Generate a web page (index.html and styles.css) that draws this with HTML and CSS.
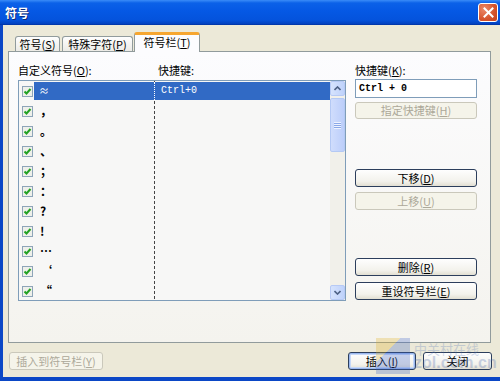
FILE: index.html
```html
<!DOCTYPE html>
<html lang="zh-CN">
<head>
    <meta charset="UTF-8">
    <title>符号</title>
    <link rel="stylesheet" href="styles.css">
</head>
<body>
    <div class="window">
        <div class="titlebar">
            <span class="title">符号</span>
            <span class="close">
                <svg width="11" height="11" viewBox="0 0 11 11"><path d="M1.5 1.5 L9.5 9.5 M9.5 1.5 L1.5 9.5" stroke="#fff" stroke-width="2" stroke-linecap="square"/></svg>
            </span>
        </div>
        <div class="client">
            <div class="tabs">
                <div class="tab t1">符号(<u>S</u>)</div>
                <div class="tab t2">特殊字符(<u>P</u>)</div>
                <div class="tab t3 active">符号栏(<u>T</u>)</div>
            </div>
            <div class="panel">
                <div class="left">
                    <div class="heads">
                        <span class="head-sym">自定义符号(<u>O</u>):</span>
                        <span class="head-key">快捷键:</span>
                    </div>
                    <div class="listbox">
                        <div class="rows">
                            <div class="row selected"><span class="chk"></span><span class="sym">≈</span><span class="key">Ctrl+0</span></div>
                            <div class="row"><span class="chk"></span><span class="sym">，</span><span class="key"></span></div>
                            <div class="row"><span class="chk"></span><span class="sym">。</span><span class="key"></span></div>
                            <div class="row"><span class="chk"></span><span class="sym">、</span><span class="key"></span></div>
                            <div class="row"><span class="chk"></span><span class="sym">；</span><span class="key"></span></div>
                            <div class="row"><span class="chk"></span><span class="sym">：</span><span class="key"></span></div>
                            <div class="row"><span class="chk"></span><span class="sym">?</span><span class="key"></span></div>
                            <div class="row"><span class="chk"></span><span class="sym">!</span><span class="key"></span></div>
                            <div class="row"><span class="chk"></span><span class="sym">…</span><span class="key"></span></div>
                            <div class="row"><span class="chk"></span><span class="sym">‘</span><span class="key"></span></div>
                            <div class="row"><span class="chk"></span><span class="sym">“</span><span class="key"></span></div>
                        </div>
                        <div class="scrollbar">
                            <div class="sb-btn">
                                <svg width="7" height="5" viewBox="0 0 7 5"><path d="M0.5 4 L3.5 1 L6.5 4" fill="none" stroke="#4d6185" stroke-width="1.6"/></svg>
                            </div>
                            <div class="sb-track">
                                <div class="sb-thumb"><span class="grip"></span></div>
                            </div>
                            <div class="sb-btn">
                                <svg width="7" height="5" viewBox="0 0 7 5"><path d="M0.5 1 L3.5 4 L6.5 1" fill="none" stroke="#4d6185" stroke-width="1.6"/></svg>
                            </div>
                        </div>
                    </div>
                </div>
                <div class="right">
                    <div class="label">快捷键(<u>K</u>):</div>
                    <div class="input">Ctrl + 0</div>
                    <button class="btn disabled assign">指定快捷键(<u>H</u>)</button>
                    <button class="btn down">下移(<u>D</u>)</button>
                    <button class="btn disabled up">上移(<u>U</u>)</button>
                    <button class="btn remove">删除(<u>R</u>)</button>
                    <button class="btn reset">重设符号栏(<u>E</u>)</button>
                </div>
            </div>
            <div class="footer">
                <button class="btn disabled add">插入到符号栏(<u>Y</u>)</button>
                <button class="btn default insert">插入(<u>I</u>)</button>
                <button class="btn shut">关闭</button>
            </div>
        </div>
        <div class="watermark">
            <span class="wm-logo"></span>
            <span class="wm-text">
                <span class="wm-cn">中关村在线</span>
                <span class="wm-en">zol.com.cn</span>
            </span>
        </div>
    </div>
</body>
</html>
```

FILE: styles.css
```css
* {
    box-sizing: border-box;
}
body {
    margin: 0;
    font-family: "Noto Sans CJK SC", "Liberation Sans", sans-serif;
    font-size: 11px;
    color: #000;
}
u {
    text-decoration: underline;
}
.window {
    width: 500px;
    height: 381px;
    display: flex;
    flex-direction: column;
    position: relative;
    overflow: hidden;
}
.titlebar {
    height: 25px;
    display: flex;
    align-items: center;
    justify-content: space-between;
    padding: 0 2px 0 5px;
    background: linear-gradient(#3a8cf8 0, #0b61e8 3px, #0558e4 45%, #0453dc 80%, #0242c0 95%, #00309e 100%);
}
.title {
    color: #fff;
    font-weight: bold;
    font-size: 12px;
    line-height: 14px;
    text-shadow: 1px 1px #0b2a7a;
}
.close {
    width: 20px;
    height: 19px;
    display: flex;
    align-items: center;
    justify-content: center;
    border: 1px solid #fff;
    border-radius: 3px;
    background: radial-gradient(circle at 30% 30%, #ec8a6a, #d5532c 60%, #c4421e);
}
.client {
    flex: 1;
    display: flex;
    flex-direction: column;
    background: #ece9d8;
    border-left: 3px solid #0b47c6;
    border-bottom: 4px solid #0b47c6;
}
.tabs {
    height: 19px;
    margin-top: 7px;
    padding-left: 12px;
    display: flex;
    align-items: flex-end;
    position: relative;
    z-index: 1;
}
.tab {
    height: 15px;
    line-height: 14px;
    border: 1px solid #919b9c;
    border-bottom: none;
    border-radius: 3px 3px 0 0;
    background: linear-gradient(#fefefe, #ecebe6);
    text-align: center;
}
.t1 {
    width: 45px;
}
.t2 {
    width: 71px;
    margin-left: 2px;
}
.t3 {
    width: 66px;
    margin-left: 1px;
}
.tab.active {
    height: 20px;
    margin-bottom: -1px;
    line-height: 15px;
    background: #fcfcfe;
    border-top: 3px solid #f6a630;
}
.panel {
    width: 483px;
    height: 292px;
    margin-left: 5px;
    border: 1px solid #919b9c;
    background: linear-gradient(#fcfcfe, #f4f3ee);
    padding: 11px 0 0 9px;
    display: flex;
    gap: 9px;
}
.left {
    width: 328px;
}
.heads {
    height: 14px;
    line-height: 14px;
    margin-bottom: 3px;
    display: flex;
}
.head-sym {
    width: 140px;
}
.listbox {
    height: 221px;
    border: 1px solid #7f9db9;
    background: #f7f7f6;
    display: flex;
}
.rows {
    flex: 1;
    background: repeating-linear-gradient(to bottom, #444 0, #444 3px, transparent 3px, transparent 5px) 135px 0 / 1px 100% no-repeat;
}
.row {
    height: 20px;
    padding: 1px 0;
    display: flex;
    align-items: center;
}
.chk {
    width: 11px;
    height: 11px;
    margin: 0 1px 0 3px;
    border: 1px solid #8ea4b8;
    background: #eef0ea url("data:image/svg+xml;utf8,<svg xmlns='http://www.w3.org/2000/svg' width='9' height='9'><path d='M1.5 4.5 L3.5 6.5 L7.5 2' fill='none' stroke='%2321a121' stroke-width='2'/></svg>") center / 9px 9px no-repeat;
    flex-shrink: 0;
}
.sym {
    width: 120px;
    height: 18px;
    line-height: 18px;
    padding-left: 6px;
    font-weight: bold;
    font-size: 12px;
}
.key {
    flex: 1;
    height: 18px;
    line-height: 18px;
    padding-left: 6px;
    font-family: "Liberation Mono", monospace;
    font-size: 10px;
}
.row.selected .sym,
.row.selected .key {
    background: #316ac5;
    color: #fff;
}
.row.selected .sym {
    padding-left: 5px;
    font-weight: normal;
    font-size: 10px;
}
.row.selected .key {
    border-left: 1px dotted #fff;
}
.scrollbar {
    width: 15px;
    display: flex;
    flex-direction: column;
    background: #f1f0ea;
}
.sb-btn {
    height: 15px;
    display: flex;
    align-items: center;
    justify-content: center;
    border: 1px solid #b7caf5;
    border-radius: 2px;
    background: linear-gradient(to right, #d6e3fd, #bfd2fb);
}
.sb-track {
    flex: 1;
    padding-top: 2px;
}
.sb-thumb {
    height: 54px;
    border: 1px solid #b4c9f4;
    border-radius: 2px;
    background: linear-gradient(to right, #d0ddfc, #bccefa);
    display: flex;
    align-items: center;
    justify-content: center;
}
.grip {
    width: 7px;
    height: 7px;
    background: repeating-linear-gradient(to bottom, #eef3ff 0, #eef3ff 1px, #8aa8e8 1px, #8aa8e8 2px);
}
.right {
    width: 122px;
    display: flex;
    flex-direction: column;
}
.label {
    height: 14px;
    line-height: 14px;
}
.input {
    height: 19px;
    margin-top: 2px;
    border: 1px solid #7f9db9;
    background: #fff;
    padding-left: 3px;
    line-height: 17px;
    font-family: "Liberation Mono", monospace;
    font-size: 10px;
    font-weight: bold;
}
.btn {
    height: 18px;
    padding: 0;
    border: 1px solid #2c3e5c;
    border-radius: 3px;
    background: linear-gradient(#fefefe, #f3f2ec 70%, #e2dfd2);
    font-family: inherit;
    font-size: 11px;
    line-height: 15px;
    color: #000;
}
.btn.disabled {
    border-color: #cac8bb;
    background: #f5f4ea;
    color: #aca899;
}
.assign {
    height: 17px;
    margin-top: 4px;
}
.down {
    margin-top: 50px;
}
.up {
    margin-top: 5px;
}
.remove {
    margin-top: 48px;
}
.reset {
    margin-top: 6px;
}
.footer {
    height: 18px;
    margin-top: 9px;
    padding: 0 8px 0 6px;
    display: flex;
    gap: 7px;
}
.add {
    width: 94px;
    margin-right: auto;
}
.insert {
    width: 68px;
}
.shut {
    width: 69px;
}
.btn.default {
    box-shadow: inset 0 0 0 1px #9ab8ef, inset 0 0 0 2px #c6d8f8;
}
.watermark {
    position: absolute;
    left: 376px;
    top: 338px;
    display: flex;
    align-items: center;
    gap: 4px;
    opacity: 0.28;
    pointer-events: none;
}
.wm-logo {
    width: 34px;
    height: 36px;
    background: linear-gradient(135deg, #e0b020 0, #e0b020 35%, #3d62c8 35%, #3d62c8 100%);
}
.wm-text {
    display: flex;
    flex-direction: column;
    line-height: 1;
}
.wm-cn {
    font-size: 13px;
    color: #5a7ab8;
}
.wm-en {
    font-family: "Liberation Sans", sans-serif;
    font-size: 16px;
    font-weight: bold;
    color: #4c6cb0;
}
```
